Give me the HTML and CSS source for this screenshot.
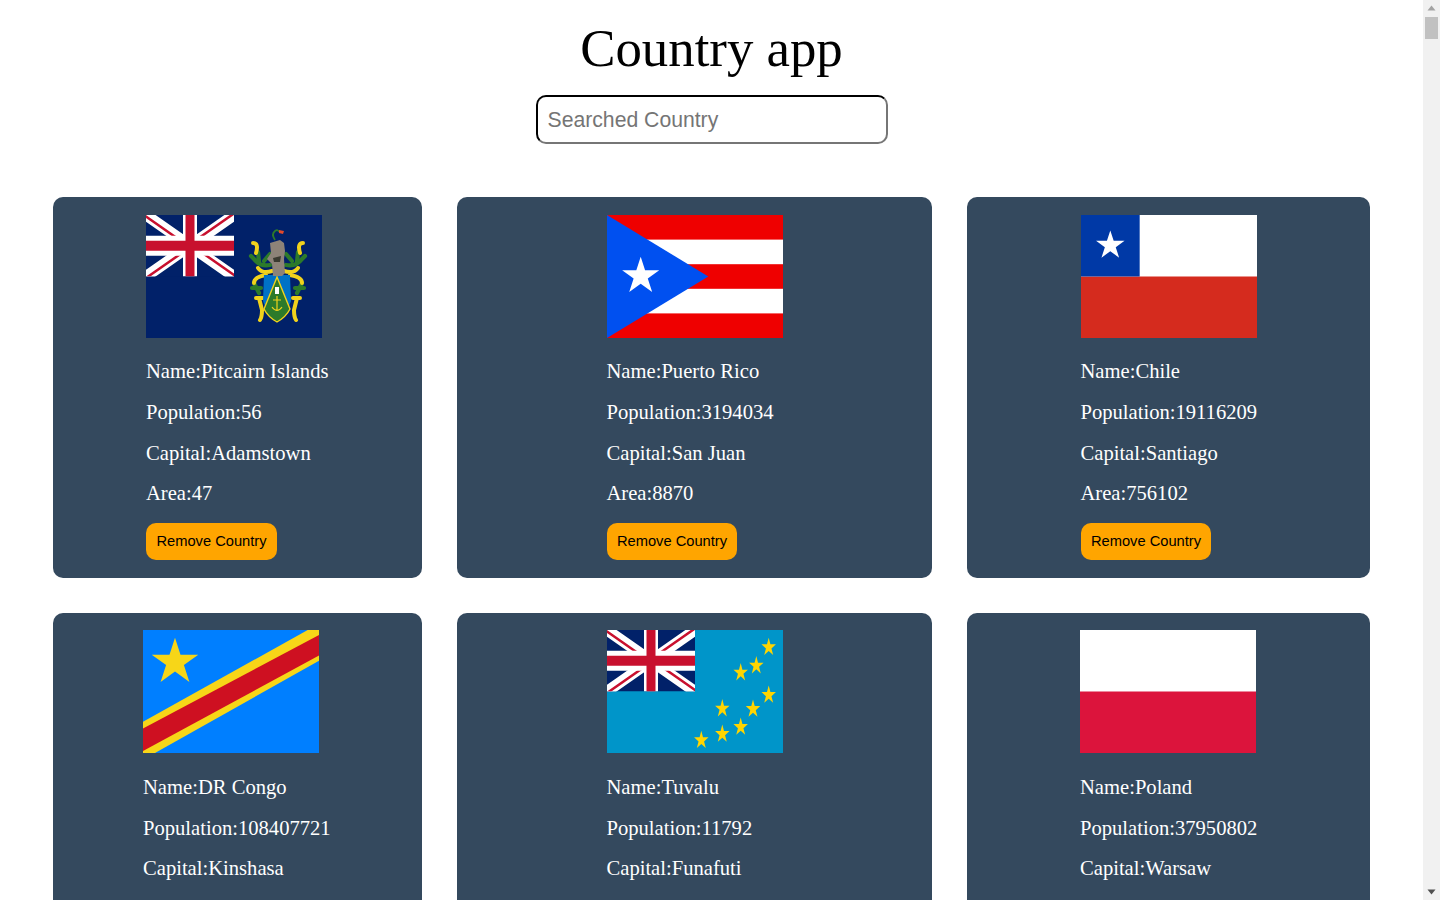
FILE: index.html
```html
<!DOCTYPE html>
<html lang="en">
<head>
<meta charset="utf-8">
<title>Country app</title>
<link rel="stylesheet" href="styles.css">
</head>
<body>
<svg class="sprite" aria-hidden="true">
  <defs>
    <polygon id="star" points="0,-1 .225,-.309 .951,-.309 .363,.118 .588,.809 0,.382 -.588,.809 -.363,.118 -.951,-.309 -.225,-.309"/>
    <clipPath id="ujclip"><path d="M44,30.75 h44 v30.75 z v30.75 h-44 z h-44 v-30.75 z v-30.75 h44 z"/></clipPath>
    <clipPath id="canton"><rect width="88" height="61.5"/></clipPath>
    <g id="jack" clip-path="url(#canton)">
      <rect width="88" height="61.5" fill="#012169"/>
      <path d="M0,0 L88,61.5 M88,0 L0,61.5" stroke="#fff" stroke-width="11"/>
      <path d="M0,0 L88,61.5 M88,0 L0,61.5" stroke="#c8102e" stroke-width="5" clip-path="url(#ujclip)"/>
      <path d="M44,0 v61.5" stroke="#fff" stroke-width="14"/>
      <path d="M0,30.75 h88" stroke="#fff" stroke-width="20"/>
      <path d="M44,0 v61.5" stroke="#c8102e" stroke-width="9"/>
      <path d="M0,30.75 h88" stroke="#c8102e" stroke-width="10"/>
    </g>
    <g id="crest-half" fill="none" stroke-linecap="round" stroke-linejoin="round">
      <path d="M124 50Q114 52 108 44L105 41M112 37L113 47M118 46l6-7M108 68l5 10M106 73h9" stroke="#2c7a2a" stroke-width="4.2"/>
      <path d="M107 28Q113 28 110 38M126 56Q116 59 112 53M120 60Q108 62 108 68M110 83h7M113 83L116 95Q116 102 114 105" stroke="#f1d21c" stroke-width="4"/>
    </g>
  </defs>
</svg>
<div class="viewport">
  <main class="page">
    <h1 class="title">Country app</h1>
    <div class="search"><input class="search-input" type="text" placeholder="Searched Country"></div>
    <section class="grid">

      <article class="card"><div class="card-inner">
        <svg class="flag" viewBox="0 0 176 123">
          <rect width="176" height="123" fill="#012169"/>
          <use href="#jack"/>
          <use href="#crest-half"/>
          <use href="#crest-half" transform="translate(264 0) scale(-1 1)"/>
          <path d="M118 60h26l1 26q-4 13-14 21q-10-8-14-21z" fill="#0072c6"/>
          <path d="M131 62l13 32q-4 8-13 13q-9-5-13-13z" fill="#2c7a2a" stroke="#f1d21c" stroke-width="1.4"/>
          <rect x="129" y="72" width="4" height="7" fill="#fff"/>
          <path d="M131 81v15M127 85h8M126 92q5 7 10 0" fill="none" stroke="#f1d21c" stroke-width="1.2"/>
          <path d="M124 28l10-3 4 3 1 8-1 8 1 14-3 3-9 0-1-12-5-5 4-6z" fill="#8d8378"/>
          <path d="M127 43l8-2-1 6-6 0z" fill="#3a3a30"/>
          <path d="M129 25q-4-6 0-9q3-2 4 1" fill="none" stroke="#2c7a2a" stroke-width="1.8"/>
          <path d="M133 15l5 1-1 3-4-1z" fill="#e2492b"/>
        </svg>
        <p class="info">Name:Pitcairn Islands</p>
        <p class="info">Population:56</p>
        <p class="info">Capital:Adamstown</p>
        <p class="info">Area:47</p>
        <button class="remove" type="button">Remove Country</button>
      </div></article>

      <article class="card"><div class="card-inner">
        <svg class="flag" viewBox="0 0 176 123">
          <rect width="176" height="123" fill="#ef0000"/>
          <rect y="24.6" width="176" height="24.6" fill="#fff"/>
          <rect y="73.8" width="176" height="24.6" fill="#fff"/>
          <polygon points="0,0 101.3,61.5 0,123" fill="#0050f0"/>
          <use href="#star" transform="translate(33.7 61.3) scale(19.5)" fill="#fff"/>
        </svg>
        <p class="info">Name:Puerto Rico</p>
        <p class="info">Population:3194034</p>
        <p class="info">Capital:San Juan</p>
        <p class="info">Area:8870</p>
        <button class="remove" type="button">Remove Country</button>
      </div></article>

      <article class="card"><div class="card-inner">
        <svg class="flag" viewBox="0 0 176 123">
          <rect width="176" height="123" fill="#fff"/>
          <rect y="61.5" width="176" height="61.5" fill="#d52b1e"/>
          <rect width="58.67" height="61.5" fill="#0039a6"/>
          <use href="#star" transform="translate(29.3 30.5) scale(15)" fill="#fff"/>
        </svg>
        <p class="info">Name:Chile</p>
        <p class="info">Population:19116209</p>
        <p class="info">Capital:Santiago</p>
        <p class="info">Area:756102</p>
        <button class="remove" type="button">Remove Country</button>
      </div></article>

      <article class="card"><div class="card-inner">
        <svg class="flag" viewBox="0 0 176 123">
          <rect width="176" height="123" fill="#007fff"/>
          <polygon points="164.7,0 176,0 176,30.7 12,123 0,123 0,91.7" fill="#f7d618"/>
          <polygon points="176,5 176,25.5 0,121 0,98.5" fill="#ce1021"/>
          <use href="#star" transform="translate(32 32.2) scale(24.5)" fill="#f7d618"/>
        </svg>
        <p class="info">Name:DR Congo</p>
        <p class="info">Population:108407721</p>
        <p class="info">Capital:Kinshasa</p>
        <p class="info">Area:2344858</p>
        <button class="remove" type="button">Remove Country</button>
      </div></article>

      <article class="card"><div class="card-inner">
        <svg class="flag" viewBox="0 0 176 123" fill="#ffd500">
          <rect width="176" height="123" fill="#0095c9"/>
          <use href="#jack"/>
          <use href="#star" transform="translate(161.7 17.3) scale(7.6 9.6)"/>
          <use href="#star" transform="translate(149.3 35.7) scale(7.6 9.6)"/>
          <use href="#star" transform="translate(133.7 42.7) scale(7.6 9.6)"/>
          <use href="#star" transform="translate(161.7 65) scale(7.6 9.6)"/>
          <use href="#star" transform="translate(146 79) scale(7.6 9.6)"/>
          <use href="#star" transform="translate(115.3 78.7) scale(7.6 9.6)"/>
          <use href="#star" transform="translate(133.7 97) scale(7.6 9.6)"/>
          <use href="#star" transform="translate(115.3 104) scale(7.6 9.6)"/>
          <use href="#star" transform="translate(94.3 110.3) scale(7.6 9.6)"/>
        </svg>
        <p class="info">Name:Tuvalu</p>
        <p class="info">Population:11792</p>
        <p class="info">Capital:Funafuti</p>
        <p class="info">Area:26</p>
        <button class="remove" type="button">Remove Country</button>
      </div></article>

      <article class="card"><div class="card-inner">
        <svg class="flag" viewBox="0 0 176 123">
          <rect width="176" height="123" fill="#fff"/>
          <rect y="61.5" width="176" height="61.5" fill="#dc143c"/>
        </svg>
        <p class="info">Name:Poland</p>
        <p class="info">Population:37950802</p>
        <p class="info">Capital:Warsaw</p>
        <p class="info">Area:312679</p>
        <button class="remove" type="button">Remove Country</button>
      </div></article>

    </section>
  </main>
  <div class="scrollbar" aria-hidden="true">
    <svg class="arrow" viewBox="0 0 17 17"><polygon points="8.5,5.5 12.5,10.5 4.5,10.5" fill="#a3a3a3"/></svg>
    <div class="thumb"></div>
    <div class="track"></div>
    <svg class="arrow" viewBox="0 0 17 17"><polygon points="4.5,6.5 12.5,6.5 8.5,11.5" fill="#505050"/></svg>
  </div>
</div>
</body>
</html>
```
FILE: styles.css
```css
* { box-sizing: border-box; }
html, body { margin: 0; height: 100%; overflow: hidden; background: #fff; }
body { font-family: "Liberation Serif", "Times New Roman", serif; }
.sprite { display: block; width: 0; height: 0; }
.viewport { display: flex; height: 100vh; overflow: hidden; }
.page { flex: 1; min-width: 0; height: 100%; overflow: hidden; padding: 0 53px; }
.title { margin: 18px 0 17px; font-size: 52.8px; font-weight: 400; line-height: 60px; text-align: center; color: #000; }
.search { display: flex; justify-content: center; }
.search-input { width: 352px; height: 49px; padding: 0 10px; border: 2px inset #767676; border-top-color: #1f1f1f; border-left-color: #1f1f1f; border-radius: 10px; font: 21.2px "Liberation Sans", Arial, sans-serif; background: #fff; outline: none; }
.search-input::placeholder { color: #757575; opacity: 1; }
.grid { display: grid; grid-template-columns: 369px 475px 403px; gap: 35px; margin-top: 53.2px; }
.card { display: flex; justify-content: center; padding: 17.6px 0; background: #34495e; border-radius: 10px; color: #fff; }
.card-inner { width: 176px; }
.card:nth-child(1) .card-inner { width: 183px; }
.card:nth-child(3) .card-inner { width: 176px; }
.card:nth-child(4) .card-inner { width: 189px; }
.card:nth-child(6) .card-inner { width: 177px; }
.flag { display: block; width: 176px; height: 123px; margin-bottom: 21.6px; }
.info { margin: 0 0 16.67px; font-size: 20.6px; line-height: 24px; white-space: nowrap; }
.remove { display: block; height: 37px; margin-top: 17.79px; padding: 0 10.4px 2px; border: 0; border-radius: 10px; background: #ffa500; color: #000; font: 14.7px "Liberation Sans", Arial, sans-serif; white-space: nowrap; }
.scrollbar { flex: 0 0 17px; height: 100%; display: flex; flex-direction: column; background: #f1f1f1; }
.arrow { display: block; width: 17px; height: 17px; flex: none; }
.thumb { flex: 0 0 22px; margin: 0 2px; background: #c1c1c1; }
.track { flex: 1; }
```
